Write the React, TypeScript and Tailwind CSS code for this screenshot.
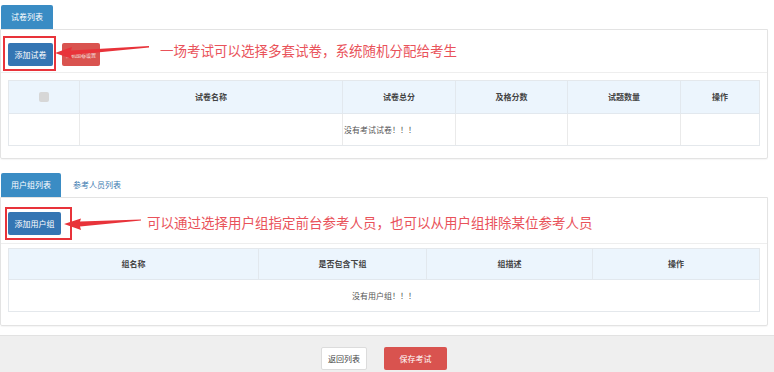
const FONT = { fontFamily: '"Noto Sans CJK SC", "Liberation Sans", sans-serif' };

const paperCols = [
  { label: '', w: 'w-[70px]' },
  { label: '试卷名称', w: 'w-[263px]' },
  { label: '试卷总分', w: 'w-[113px]' },
  { label: '及格分数', w: 'w-[112px]' },
  { label: '试题数量', w: 'w-[113px]' },
  { label: '操作', w: 'flex-1' },
];

const groupCols = [
  { label: '组名称', w: 'w-[249px]' },
  { label: '是否包含下组', w: 'w-[168px]' },
  { label: '组描述', w: 'w-[166px]' },
  { label: '操作', w: 'flex-1' },
];

function Tab({ label, active }: { label: string; active?: boolean }) {
  return (
    <div
      className={
        active
          ? 'h-[24px] px-[10px] flex items-center rounded-t-[2px] bg-[#3a8cc4] text-white text-[8px]'
          : 'h-[24px] px-[12px] flex items-center text-[#3a7ab0] text-[8px]'
      }
    >
      {label}
    </div>
  );
}

export default function App() {
  return (
    <div className="relative w-[774px] h-[372px] overflow-hidden bg-white text-[#333]" style={FONT}>
      {/* 试卷 */}
      <div className="pt-[5px] pl-[1px]">
        <div className="flex">
          <Tab label="试卷列表" active />
        </div>
      </div>
      <div className="mr-[6px] border border-[#e3e3e3] rounded-b-[2px] shadow-[0_1px_1px_rgba(0,0,0,0.04)] h-[130px]">
        <div className="h-[43px] pt-[13px] px-[7px] flex gap-[9px] border-b border-[#eeeeee]">
          <button className="h-[23px] w-[45px] rounded-[2px] bg-[#3475b3] text-white text-[8px]">添加试卷</button>
          <button className="h-[23px] w-[38px] rounded-[2px] bg-[#d9534f] text-white/80 text-[5px]">随机组卷设置</button>
        </div>
        <div className="pt-[7px] px-[7px]">
          <div className="border border-[#e4e8ec]">
            <div className="flex h-[33px] bg-[#ecf5fd] border-b border-[#e2e8ee]">
              {paperCols.map((c, i) => (
                <div
                  key={i}
                  className={`${c.w} flex items-center justify-center text-[8px] font-bold text-[#444] ${i > 0 ? 'border-l border-[#e2e8ee]' : ''}`}
                >
                  {i === 0 ? <span className="w-[10px] h-[10px] rounded-[2px] bg-[#d7d7d7]" /> : c.label}
                </div>
              ))}
            </div>
            <div className="flex h-[31px]">
              {paperCols.map((c, i) => (
                <div
                  key={i}
                  className={`${c.w} flex items-center text-[8px] text-[#555] ${i > 0 ? 'border-l border-[#eaeaea]' : ''}`}
                >
                  {i === 2 ? <span className="pl-[1px] whitespace-nowrap">没有考试试卷！！！</span> : null}
                </div>
              ))}
            </div>
          </div>
        </div>
      </div>

      {/* 用户组 */}
      <div className="pt-[14px] pl-[1px]">
        <div className="flex">
          <Tab label="用户组列表" active />
          <Tab label="参考人员列表" />
        </div>
      </div>
      <div className="mr-[6px] border border-[#e3e3e3] rounded-b-[2px] shadow-[0_1px_1px_rgba(0,0,0,0.04)] h-[129px]">
        <div className="h-[46px] pt-[14px] px-[7px] flex border-b border-[#eeeeee]">
          <button className="h-[23px] w-[53px] rounded-[2px] bg-[#3475b3] text-white text-[8px]">添加用户组</button>
        </div>
        <div className="pt-[4px] px-[7px]">
          <div className="border border-[#e4e8ec]">
            <div className="flex h-[31px] bg-[#ecf5fd] border-b border-[#e2e8ee]">
              {groupCols.map((c, i) => (
                <div
                  key={i}
                  className={`${c.w} flex items-center justify-center text-[8px] font-bold text-[#444] ${i > 0 ? 'border-l border-[#e2e8ee]' : ''}`}
                >
                  {c.label}
                </div>
              ))}
            </div>
            <div className="h-[31px] flex items-center justify-center text-[8px] text-[#555]">没有用户组！！！</div>
          </div>
        </div>
      </div>

      {/* 底部 */}
      <div className="mt-[9px] h-[40px] bg-[#efefef] border-t border-[#e2e2e2] flex justify-center gap-[17px] pt-[11px] pr-[6px]">
        <button className="h-[23px] w-[46px] bg-white border border-[#dcdcdc] rounded-[2px] text-[8px] text-[#444]">返回列表</button>
        <button className="h-[23px] w-[63px] bg-[#d9534f] rounded-[2px] text-[8px] text-white">保存考试</button>
      </div>

      {/* 标注 */}
      <div className="absolute left-[3px] top-[36px] w-[53px] h-[35px] border-2 border-[#e8333a]" />
      <div className="absolute left-[5px] top-[207px] w-[67px] h-[33px] border-2 border-[#e8333a]" />
      <svg className="absolute left-0 top-0 pointer-events-none" width="774" height="372">
        <path d="M149 46 L71 50.5 L72 47 L55 53 L72 59 L71 55 L149 47.5 Z" fill="#e8333a" />
        <path d="M141 219.5 L80 221.5 L81 218.5 L64 224 L81 230 L80 226.5 L141 220.5 Z" fill="#e8333a" />
      </svg>
      <div className="absolute left-[160px] top-[41px] text-[13.5px] leading-[18px] text-[#e9525a] whitespace-nowrap">
        一场考试可以选择多套试卷，系统随机分配给考生
      </div>
      <div className="absolute left-[147px] top-[213px] text-[13.5px] leading-[18px] text-[#e9525a] whitespace-nowrap">
        可以通过选择用户组指定前台参考人员，也可以从用户组排除某位参考人员
      </div>
    </div>
  );
}
